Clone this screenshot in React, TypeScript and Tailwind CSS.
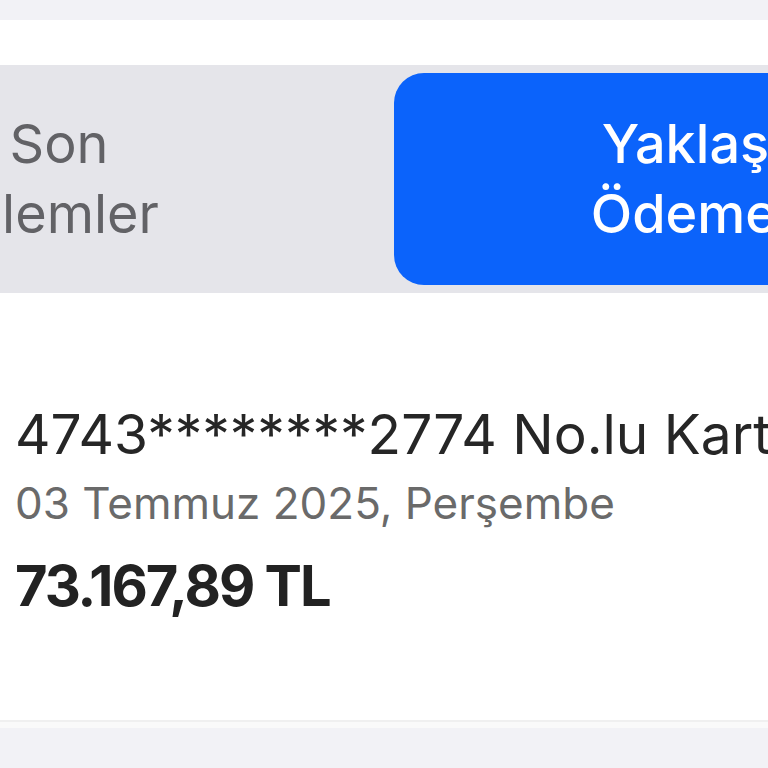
export default function App() {
  const font = { fontFamily: "Inter, 'Noto Sans', sans-serif" };
  return (
    <div className="w-[768px] h-[768px] overflow-hidden bg-white flex flex-col" style={font}>
      <div className="h-[20px] bg-[#f2f2f6]" />
      <div className="h-[45px] bg-white" />

      <div className="h-[228px] bg-[#e5e5ea] p-[8px] flex gap-[8px] overflow-hidden">
        <div className="w-[672px] shrink-0 -ml-[294px] pl-[18px] flex flex-col items-center justify-center text-[54px] leading-[70px] text-[#626266]">
          <span>Son</span>
          <span>İşlemler</span>
        </div>
        <div className="w-[672px] shrink-0 rounded-[30px] bg-[#0b63fb] pr-[26px] flex flex-col items-center justify-center text-[54px] leading-[70px] font-medium text-white">
          <span>Yaklaşan</span>
          <span>Ödemeler</span>
        </div>
      </div>

      <div className="flex-1 bg-white px-[15px] pt-[105px] flex flex-col">
        <div className="text-[55px] leading-[72px] text-[#262626] whitespace-nowrap">4743********2774 No.lu Kart</div>
        <div className="text-[44px] leading-[66px] text-[#6a6a6a] whitespace-nowrap">03 Temmuz 2025, Perşembe</div>
        <div className="mt-[19px] text-[56px] leading-[62px] font-bold tracking-[-2px] text-[#222222] whitespace-nowrap">73.167,89 TL</div>
      </div>

      <div className="h-[2px] bg-[#f0f0f0]" />
      <div className="h-[6px] bg-[#fafafa]" />
      <div className="h-[40px] bg-[#f2f2f6]" />
    </div>
  );
}
